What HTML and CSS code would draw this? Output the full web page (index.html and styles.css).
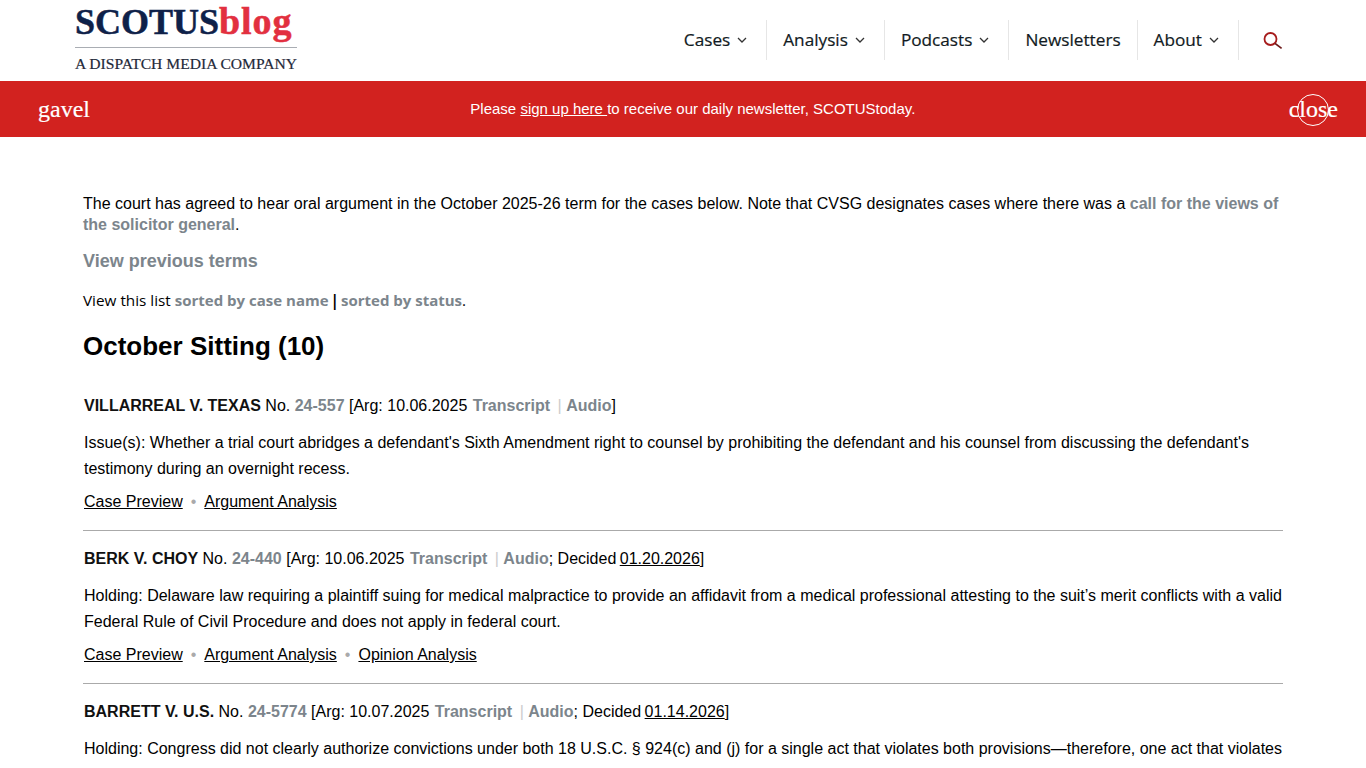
FILE: index.html
```html
<!DOCTYPE html>
<html lang="en">
<head>
    <meta charset="UTF-8">
    <title>Cases - SCOTUSblog</title>
    <link rel="stylesheet" href="styles.css">
</head>
<body>

    <header class="site-header">
        <a class="logo" href="#">
            <span class="logo-name">SCOTUS<span class="logo-blog">blog</span></span>
            <span class="logo-tag">A DISPATCH MEDIA COMPANY</span>
        </a>
        <nav class="main-nav">
            <a class="nav-item" href="#">Cases
                <svg class="chevron" viewBox="0 0 10 6"><path d="M1 1l4 4 4-4"/></svg>
            </a>
            <a class="nav-item" href="#">Analysis
                <svg class="chevron" viewBox="0 0 10 6"><path d="M1 1l4 4 4-4"/></svg>
            </a>
            <a class="nav-item" href="#">Podcasts
                <svg class="chevron" viewBox="0 0 10 6"><path d="M1 1l4 4 4-4"/></svg>
            </a>
            <a class="nav-item" href="#">Newsletters</a>
            <a class="nav-item" href="#">About
                <svg class="chevron" viewBox="0 0 10 6"><path d="M1 1l4 4 4-4"/></svg>
            </a>
            <a class="nav-search" href="#" aria-label="Search">
                <svg viewBox="0 0 20 20"><circle cx="7.5" cy="9" r="6"/><path class="search-handle" d="M12 13.4l6.6 5"/></svg>
            </a>
        </nav>
    </header>

    <div class="banner">
        <span class="banner-icon">gavel</span>
        <p class="banner-text">Please <a href="#">sign up here </a>to receive our daily newsletter, SCOTUStoday.</p>
        <span class="banner-close">close<span class="close-ring"></span></span>
    </div>

    <main class="content">
        <p class="intro">The court has agreed to hear oral argument in the October 2025-26 term for the cases below. Note that CVSG designates cases where there was a <a class="muted" href="#">call for the views of the solicitor general</a>.</p>
        <h3 class="prev-terms"><a class="muted" href="#">View previous terms</a></h3>
        <p class="sort-line">View this list <a class="muted" href="#">sorted by case name</a> <b class="sort-pipe">|</b> <a class="muted" href="#">sorted by status</a>.</p>
        <h2 class="sitting">October Sitting (10)</h2>

        <article class="case">
            <p class="case-head"><b class="case-name">VILLARREAL V. TEXAS</b> No. <a class="muted" href="#">24-557</a> [Arg: 10.06.2025 <a class="muted transcript" href="#">Transcript</a> <span class="pipe">|</span> <a class="muted" href="#">Audio</a>]</p>
            <p class="case-issue">Issue(s): Whether a trial court abridges a defendant's Sixth Amendment right to counsel by prohibiting the defendant and his counsel from discussing the defendant's testimony during an overnight recess.</p>
            <p class="case-links"><a href="#">Case Preview</a><span class="dot">•</span><a href="#">Argument Analysis</a></p>
        </article>

        <article class="case">
            <p class="case-head"><b class="case-name">BERK V. CHOY</b> No. <a class="muted" href="#">24-440</a> [Arg: 10.06.2025 <a class="muted transcript" href="#">Transcript</a> <span class="pipe">|</span> <a class="muted" href="#">Audio</a>; Decided <a class="date" href="#">01.20.2026</a>]</p>
            <p class="case-issue">Holding: Delaware law requiring a plaintiff suing for medical malpractice to provide an affidavit from a medical professional attesting to the suit’s merit conflicts with a valid Federal Rule of Civil Procedure and does not apply in federal court.</p>
            <p class="case-links"><a href="#">Case Preview</a><span class="dot">•</span><a href="#">Argument Analysis</a><span class="dot">•</span><a href="#">Opinion Analysis</a></p>
        </article>

        <article class="case">
            <p class="case-head"><b class="case-name">BARRETT V. U.S.</b> No. <a class="muted" href="#">24-5774</a> [Arg: 10.07.2025 <a class="muted transcript" href="#">Transcript</a> <span class="pipe">|</span> <a class="muted" href="#">Audio</a>; Decided <a class="date" href="#">01.14.2026</a>]</p>
            <p class="case-issue">Holding: Congress did not clearly authorize convictions under both 18 U.S.C. § 924(c) and (j) for a single act that violates both provisions—therefore, one act that violates</p>
        </article>
    </main>

</body>
</html>
```

FILE: styles.css
```css
html, body {
    height: 768px;
    overflow: hidden;
}
body {
    margin: 0;
    background-color: #fff;
    color: #000;
    font-family: 'Liberation Sans', Arial, sans-serif;
    font-size: 16px;
}
a {
    color: inherit;
}
.site-header {
    height: 81px;
    box-sizing: border-box;
    padding: 0 83px 0 75px;
    display: flex;
    justify-content: space-between;
}
.logo {
    width: 222px;
    display: flex;
    flex-direction: column;
    text-decoration: none;
    font-family: 'Liberation Serif', serif;
}
.logo-name {
    height: 47px;
    border-bottom: 1px solid #a9adb3;
    font-size: 36px;
    line-height: 43px;
    font-weight: 700;
    color: #0e2149;
    -webkit-text-stroke: 0.5px #0e2149;
    white-space: nowrap;
}
.logo-blog {
    color: #e2303f;
    -webkit-text-stroke: 0.5px #e2303f;
    font-size: 38px;
    letter-spacing: 0.9px;
}
.logo-tag {
    margin-top: 7px;
    font-size: 15.6px;
    line-height: 18px;
    color: #1f2a3a;
    -webkit-text-stroke: 0.2px #1f2a3a;
    white-space: nowrap;
}
.main-nav {
    display: flex;
    align-items: center;
    padding-bottom: 2px;
}
.nav-item {
    height: 40px;
    display: flex;
    align-items: center;
    gap: 7px;
    padding: 0 16px;
    border-right: 1px solid #e6e6e6;
    font-family: 'Open Sans', 'Noto Sans', sans-serif;
    font-size: 17.2px;
    color: #111a22;
    -webkit-text-stroke: 0.2px #111a22;
    text-decoration: none;
}
.chevron {
    width: 10px;
    height: 6px;
    margin-right: 3px;
    fill: none;
    stroke: #333;
    stroke-width: 1.3;
}
.nav-search {
    display: flex;
    padding-left: 24px;
}
.nav-search svg {
    width: 20px;
    height: 20px;
    fill: none;
    stroke: #a61c1c;
    stroke-width: 1.8;
}
.nav-search .search-handle {
    stroke: #6e1a1a;
}
.banner {
    height: 56px;
    background-color: #d2221f;
    color: #fff;
    display: flex;
    align-items: center;
    justify-content: space-between;
    padding: 0 28px 0 38px;
}
.banner-icon,
.banner-close {
    font-family: 'Liberation Serif', serif;
    font-size: 24px;
    -webkit-text-stroke: 0.2px #fff;
}
.banner-text {
    margin: 0 0 2px 7px;
    font-size: 15px;
}
.banner-close {
    position: relative;
}
.close-ring {
    position: absolute;
    left: 8px;
    top: -2px;
    width: 30px;
    height: 30px;
    border: 1px solid #fff;
    border-radius: 50%;
}
.content {
    width: 1200px;
    margin: 0 0 0 83px;
    padding-top: 56px;
}
.muted {
    color: #7c858c;
    font-weight: 700;
    text-decoration: none;
}
.intro {
    margin: 0;
    line-height: 21px;
}
.prev-terms {
    margin: 16px 0 0;
    font-size: 18px;
    line-height: 21px;
}
.sort-line {
    margin: 18px 0 0;
    font-family: 'Open Sans', 'Noto Sans', sans-serif;
    font-size: 15.3px;
    line-height: 21px;
}
.sort-line .muted {
    font-size: 15px;
}
.sort-pipe {
    margin: 0 -2px;
}
.sitting {
    margin: 19px 0 0;
    font-size: 26px;
    line-height: 32px;
}
.case {
    padding: 0 0 18px 1px;
    border-bottom: 1px solid #aaa;
    margin-top: 17px;
}
.sitting + .case {
    margin-top: 33px;
}
.case:last-child {
    border-bottom: none;
}
.case-head {
    margin: 0;
    line-height: 21px;
}
.case-name {
    color: #111;
}
.transcript {
    margin-left: 1px;
}
.pipe {
    color: #ccc;
    margin-left: 3px;
}
.date {
    margin-left: -1px;
}
.case-issue {
    margin: 14px 0 0;
    line-height: 26px;
}
.case-links {
    margin: 9px 0 0;
    line-height: 21px;
}
.dot {
    color: #aaa;
    margin: 0 8px;
}
```
